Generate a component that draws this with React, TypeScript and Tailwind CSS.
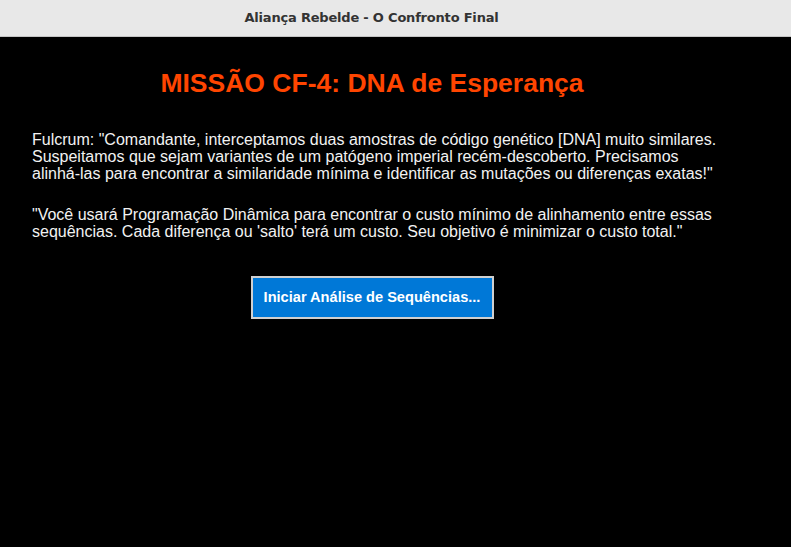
export default function App() {
  return (
    <div className="min-h-[547px] w-full bg-black flex flex-col">
      <div className="h-[37px] bg-[#e8e8e8] border-b border-[#c4c4c4] flex items-center justify-center pr-[48px]">
        <span className="text-[13px] font-bold text-[#333333] font-['DejaVu_Sans',sans-serif] tracking-[-0.2px]">
          Aliança Rebelde - O Confronto Final
        </span>
      </div>
      <div className="ml-[32px] w-[680px] font-['Liberation_Sans',Arial,sans-serif]">
        <h1 className="mt-[31px] text-center text-[26.5px] font-bold text-[#ff4500] leading-[30px]">
          MISSÃO CF-4: DNA de Esperança
        </h1>
        <p className="mt-[33px] text-[16px] leading-[17px] text-[#f2f2f2] whitespace-nowrap">
          Fulcrum: "Comandante, interceptamos duas amostras de código genético [DNA] muito similares.
          <br />
          Suspeitamos que sejam variantes de um patógeno imperial recém-descoberto. Precisamos
          <br />
          alinhá-las para encontrar a similaridade mínima e identificar as mutações ou diferenças exatas!"
        </p>
        <p className="mt-[24px] text-[16px] leading-[17px] text-[#f2f2f2] whitespace-nowrap">
          "Você usará Programação Dinâmica para encontrar o custo mínimo de alinhamento entre essas
          <br />
          sequências. Cada diferença ou 'salto' terá um custo. Seu objetivo é minimizar o custo total."
        </p>
        <div className="mt-[36px] flex justify-center">
          <button className="h-[43px] w-[243px] bg-[#0078d7] border-2 border-[#d0d0d0] text-white text-[14.6px] font-bold">
            Iniciar Análise de Sequências...
          </button>
        </div>
      </div>
    </div>
  )
}
